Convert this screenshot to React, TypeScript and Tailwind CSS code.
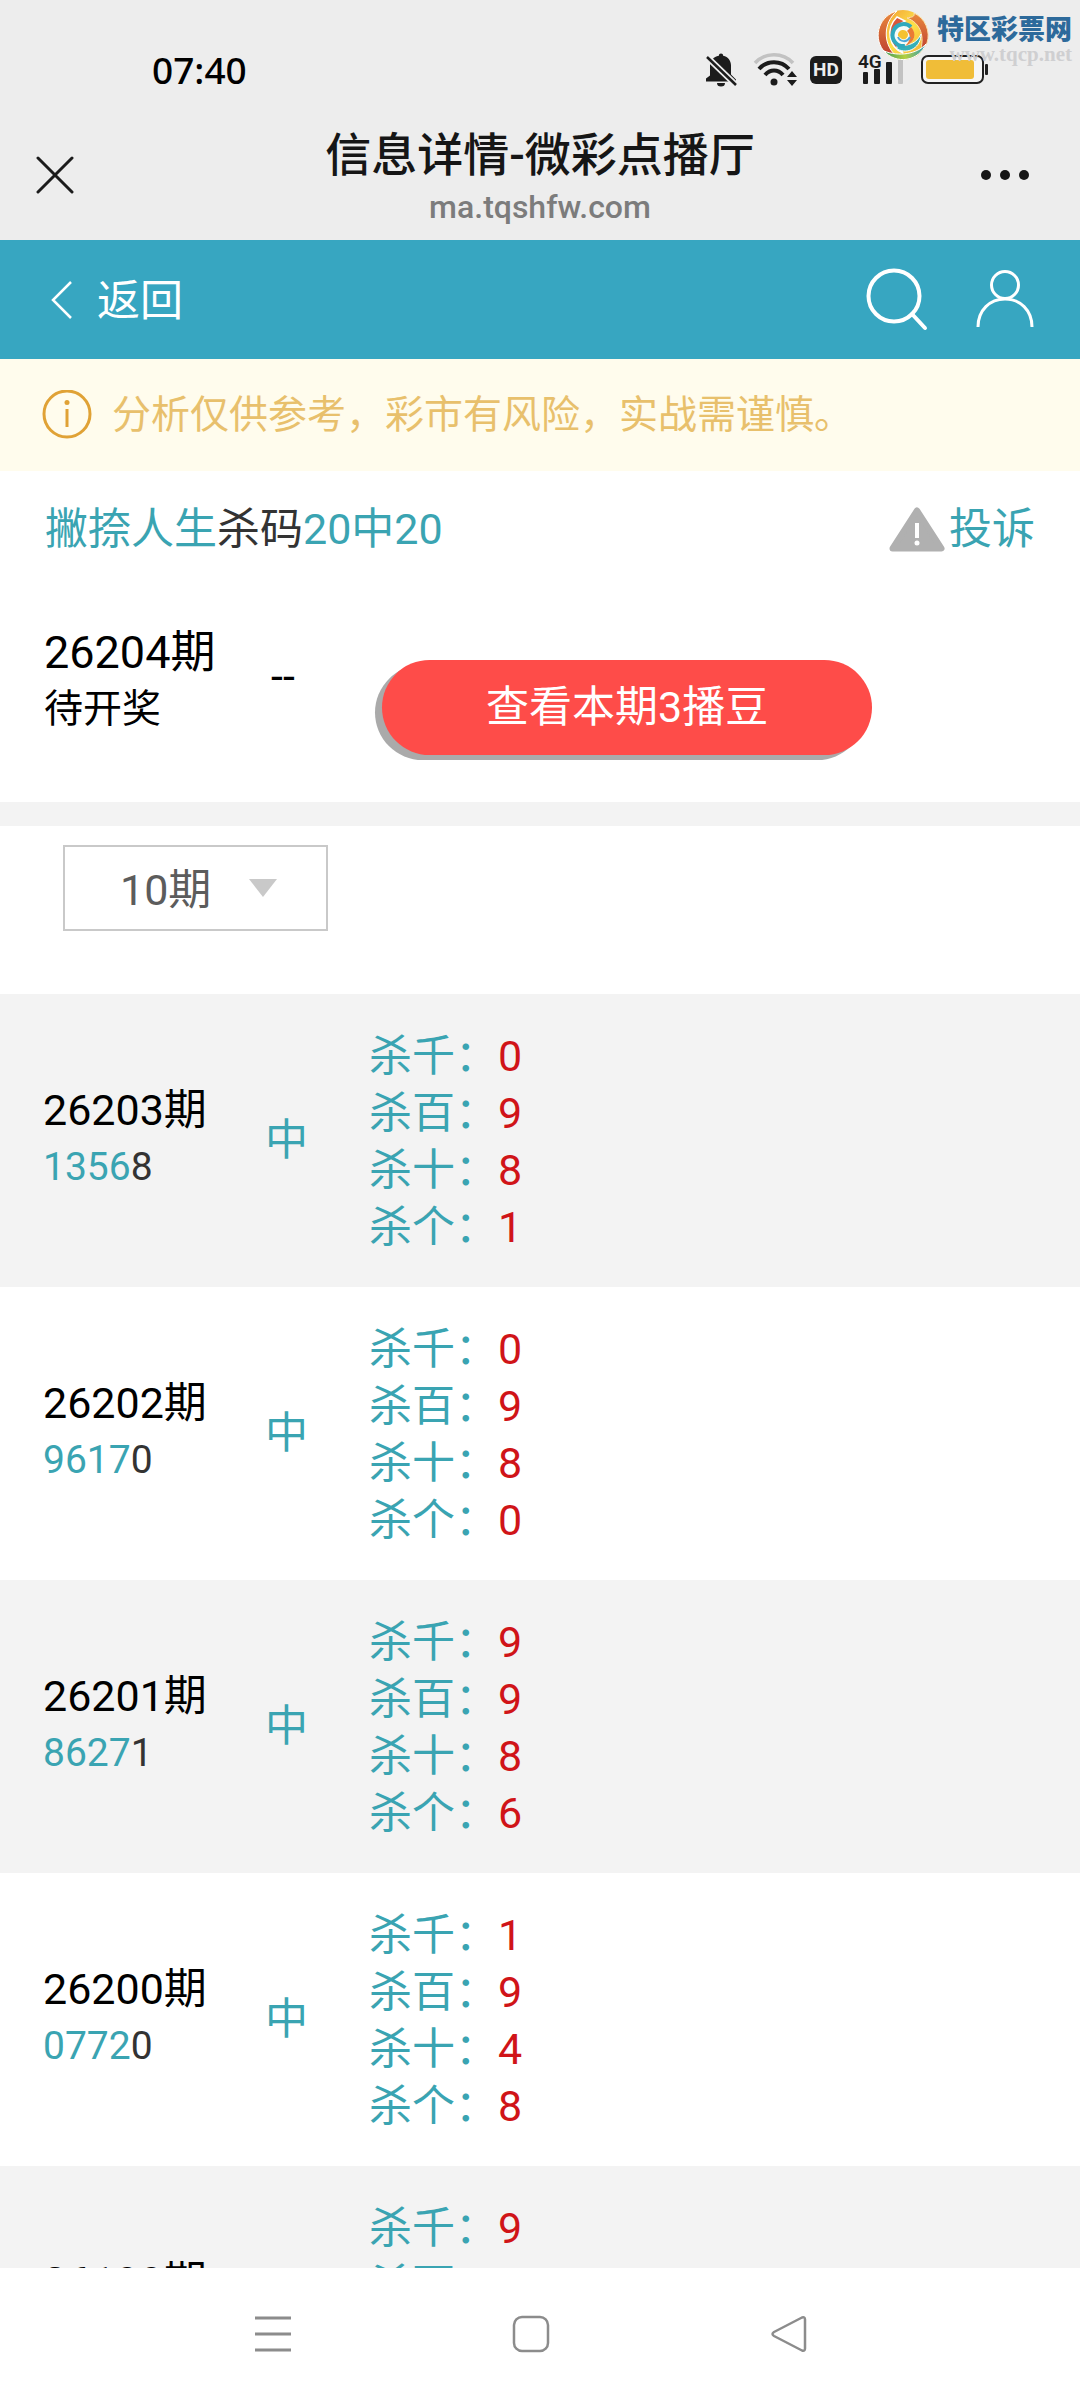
import React, { useState } from "react";

type Kill = { label: string; value: string };

type Issue = {
  issue: string;
  hit: string;
  rest: string;
  status: string;
  kills: Kill[];
};

const makeKills = (values: string[]): Kill[] =>
  ["杀千", "杀百", "杀十", "杀个"].map((label, i) => ({ label, value: values[i] }));

const issues: Issue[] = [
  { issue: "26203期", hit: "1356", rest: "8", status: "中", kills: makeKills(["0", "9", "8", "1"]) },
  { issue: "26202期", hit: "9617", rest: "0", status: "中", kills: makeKills(["0", "9", "8", "0"]) },
  { issue: "26201期", hit: "8627", rest: "1", status: "中", kills: makeKills(["9", "9", "8", "6"]) },
  { issue: "26200期", hit: "0772", rest: "0", status: "中", kills: makeKills(["1", "9", "4", "8"]) },
  { issue: "26199期", hit: "", rest: "", status: "中", kills: makeKills(["9", "", "", ""]) },
];

function Watermark() {
  return (
    <div className="absolute top-2 right-2 flex items-start gap-2">
      <svg className="h-[54px] w-[52px]" viewBox="-26 -27 52 54">
        <defs>
          <linearGradient id="warm" x1="0" y1="0" x2="1" y2="1">
            <stop offset="0" stopColor="#f0932f" />
            <stop offset="0.500" stopColor="#fde14a" />
            <stop offset="1" stopColor="#f2a02c" />
          </linearGradient>
          <linearGradient id="red" x1="0" y1="0" x2="0" y2="1">
            <stop offset="0" stopColor="#ea8a3c" />
            <stop offset="1" stopColor="#bd3f30" />
          </linearGradient>
          <linearGradient id="cool" x1="0" y1="0" x2="1" y2="0">
            <stop offset="0" stopColor="#3a9a5c" />
            <stop offset="0.500" stopColor="#b5cf3e" />
            <stop offset="1" stopColor="#2b9bb8" />
          </linearGradient>
        </defs>
        <circle r="25" fill="url(#warm)" />
        {/* outer blades */}
        <path d="M-6 -24A25 25 0 0 0 -20 15C-16 19 -12 20 -8 20C-20 8 -20 -12 -6 -24Z" fill="url(#red)" stroke="#fff" strokeWidth="1" />
        <path d="M-6 -18C-18 -6 -14 12 0 18C-10 6 -10 -8 2 -14Z" fill="#d9573a" stroke="#fff" strokeWidth="1.500" />
        <path d="M11 -22A25 25 0 0 1 24 8C22 12 20 14 17 17C22 2 18 -12 4 -17C9 -18 12 -18 11 -22Z" fill="url(#red)" stroke="#fbe3b0" strokeWidth="1" />
        <path d="M-19 16A25 25 0 0 0 23 9C14 19 -4 22 -19 16Z" fill="url(#cool)" stroke="#fff" strokeWidth="1" />
        <path d="M-6 14C6 20 18 12 18 -1C14 8 4 13 -6 8Z" fill="#35b0b8" stroke="#fff" strokeWidth="1" />
        {/* inner swirl */}
        <circle r="11" fill="#f4fbf8" />
        <path d="M8 -8A11 11 0 1 0 2 11" fill="none" stroke="#2fa9bd" strokeWidth="4" />
        <path d="M8 -8C14 -2 12 8 2 11C8 6 8 0 4 -4Z" fill="#ea7b34" />
        <path d="M-5 1A5 5 0 0 1 5 -1C5 3 2 5 -1 4Z" fill="#f5c230" />
        <path d="M-5 2C-3 7 4 8 7 2" fill="none" stroke="#4aa6d8" strokeWidth="2" />
      </svg>
      <div className="pt-2 text-right">
        <div className="text-[27px] leading-7 font-black text-[#2d6a9b]">特区彩票网</div>
        <div className="font-['Liberation_Serif',serif] text-[21px] leading-5 font-bold text-[#cfcfd1]">www.tqcp.net</div>
      </div>
    </div>
  );
}

function StatusBar() {
  return (
    <div className="flex h-[110px] items-center justify-between pt-[30px] pr-[91px] pl-[152px]">
      <span className="font-['Noto_Sans',sans-serif] text-[37px] leading-10 font-medium text-black">07:40</span>
      <div className="flex items-center gap-3">
        <svg className="h-9 w-9" viewBox="0 0 36 36" fill="#1c1c1c">
          <path d="M17 1.500a2.200 2.200 0 0 1 2.200 2.200c5 1.200 7.800 5 7.800 9.800v9l5 5v2H2v-3l4-3v-10c0-5 3.500-8.600 8.800-9.800A2.200 2.200 0 0 1 17 1.500Z" />
          <path d="M13 31h8a4 3.500 0 0 1-8 0Z" />
          <path d="M3 5L32 33" stroke="#ededed" strokeWidth="6" />
          <path d="M3 5L32 33" stroke="#1c1c1c" strokeWidth="2.500" />
        </svg>
        <svg className="h-9 w-[46px]" viewBox="0 0 46 36" fill="none">
          <path d="M3 11C13 0 31 0 41 11" stroke="#c2c2c2" strokeWidth="3.500" />
          <path d="M7 17C15 8 29 8 37 17" stroke="#1c1c1c" strokeWidth="4" />
          <path d="M13 23C18 17 26 17 31 23" stroke="#1c1c1c" strokeWidth="4" />
          <circle cx="22" cy="30" r="3.500" fill="#1c1c1c" />
          <path d="M40 19l5 6H35Z M40 34l5-6H35Z" fill="#1c1c1c" />
        </svg>
        <div className="w-9">
          <div className="flex h-7 w-8 items-center justify-center rounded-md bg-[#1c1c1c] font-['Roboto',sans-serif] text-[19px] font-bold text-[#ededed]">
            HD
          </div>
        </div>
        <svg className="h-9 w-[50px] overflow-visible" viewBox="0 0 50 36" fill="#1c1c1c">
          <text x="0" y="16" fontFamily="Roboto, sans-serif" fontSize="19" fontWeight="600">4G</text>
          <rect x="5" y="20" width="5" height="12" rx="1" />
          <rect x="16" y="17" width="6" height="15" rx="1" />
          <rect x="28" y="10" width="6" height="22" rx="1" />
          <rect x="40" y="4" width="5" height="28" rx="1" fill="#c2c2c2" />
        </svg>
        <svg className="h-9 w-[69px]" viewBox="0 0 69 36">
          <rect x="2" y="4" width="61" height="27" rx="6" fill="#f6f6f6" stroke="#222" strokeWidth="2" />
          <rect x="6" y="8" width="48" height="19" rx="3" fill="#f0bd38" />
          <rect x="65" y="12" width="3" height="11" rx="1" fill="#222" />
        </svg>
      </div>
    </div>
  );
}

function TitleBar() {
  return (
    <div className="grid h-[130px] grid-cols-[1fr_auto_1fr] items-center px-9">
      <button type="button" aria-label="关闭" className="justify-self-start">
        <svg className="h-[38px] w-[38px]" viewBox="0 0 38 38" stroke="#1c1c1c" strokeWidth="3" strokeLinecap="round">
          <path d="M2 2L36 36M36 2L2 36" />
        </svg>
      </button>
      <div className="pt-3 text-center">
        <h1 className="text-[46px] leading-[52px] font-medium text-[#161616]">信息详情-微彩点播厅</h1>
        <p className="text-[32px] leading-[52px] font-medium text-[#7c7c7c]">ma.tqshfw.com</p>
      </div>
      <button type="button" aria-label="更多" className="mr-3 justify-self-end">
        <svg className="h-4 w-[54px]" viewBox="0 0 54 16" fill="#161616">
          <circle cx="8" cy="8" r="5" />
          <circle cx="27" cy="8" r="5" />
          <circle cx="46" cy="8" r="5" />
        </svg>
      </button>
    </div>
  );
}

function SiteHeader() {
  return (
    <header className="flex h-[119px] items-center justify-between bg-[#37a6c1] pr-[45px] pl-[49px] text-white">
      <a href="#" className="flex items-center gap-6 text-[43px] leading-[57px]">
        <svg className="h-10 w-6" viewBox="0 0 24 40" fill="none" stroke="currentColor" strokeWidth="2.500">
          <path d="M22 2L4 20L22 38" />
        </svg>
        <span className="pt-1">返回</span>
      </a>
      <div className="flex items-center gap-[46px]">
        <button type="button" aria-label="搜索">
          <svg className="h-16 w-16" viewBox="0 0 64 64" fill="none" stroke="currentColor" strokeWidth="4" strokeLinecap="round">
            <circle cx="29" cy="28" r="25.500" />
            <path d="M47 46L60 60" />
          </svg>
        </button>
        <button type="button" aria-label="我的">
          <svg className="h-16 w-[60px]" viewBox="0 0 60 64" fill="none" stroke="currentColor" strokeWidth="3">
            <circle cx="30" cy="17" r="13.500" />
            <path d="M3 59C3 42 15 31 30 31S57 42 57 59" />
          </svg>
        </button>
      </div>
    </header>
  );
}

export default function App() {
  const [range, setRange] = useState("10");

  return (
    <div className="flex h-screen flex-col overflow-hidden bg-white font-['Roboto','Noto_Sans_CJK_SC',sans-serif] text-black">
      <div className="relative bg-[#ededed]">
        <StatusBar />
        <TitleBar />
        <Watermark />
      </div>

      <SiteHeader />

      <main className="min-h-0 flex-1 overflow-hidden">
        <div className="flex h-28 items-center gap-5 bg-[#fffced] px-[42px] text-[39px] text-[#e8c06c]">
          <svg className="h-[50px] w-[50px]" viewBox="0 0 50 50" fill="none" stroke="#e0a236" strokeWidth="3">
            <circle cx="25" cy="24" r="23" />
            <path d="M25 19V37" />
            <circle cx="25" cy="12.500" r="2.500" fill="#e0a236" stroke="none" />
          </svg>
          <p>分析仅供参考，彩市有风险，实战需谨慎。</p>
        </div>

        {/* Expert and current issue */}
        <section className="border-b-[24px] border-[#f3f3f3]">
          <div className="flex h-[117px] items-center justify-between px-[45px] text-[43px] leading-[57px] text-[#3aa4b2]">
            <h2>
              撇捺人生<span className="text-[#333]">杀码</span>20中20
            </h2>
            <a href="#" className="flex items-center gap-1">
              <svg className="h-[46px] w-14" viewBox="0 0 56 46">
                <path d="M28 3.500L52.500 41.500H3.500Z" fill="#b0b0b0" stroke="#b0b0b0" strokeWidth="6" strokeLinejoin="round" />
                <path d="M26 16h4v15h-4Z" fill="#fff" />
                <circle cx="28" cy="36" r="2.500" fill="#fff" />
              </svg>
              投诉
            </a>
          </div>
          <div className="flex h-[214px] items-start px-11 pt-9">
            <div className="w-[227px] leading-[57px]">
              <p className="text-[45px]">26204期</p>
              <p className="text-[39px]">待开奖</p>
            </div>
            <p className="w-[111px] pt-6 text-[43px] leading-[57px]">--</p>
            <button
              type="button"
              className="mt-9 h-[95px] rounded-full bg-[#fe4c49] px-[104px] text-[43px] text-white shadow-[-7px_5px_0_#aaaaaa]"
            >
              查看本期3播豆
            </button>
          </div>
        </section>

        {/* History filter */}
        <div className="h-[168px] px-[63px] pt-[19px]">
          <div className="relative w-[265px]">
            <select
              aria-label="期数"
              value={range}
              onChange={(e) => setRange(e.target.value)}
              className="h-[86px] w-full appearance-none border-2 border-[#c9c9c9] bg-white pt-1 pl-[55px] text-[43px] text-[#5c5c5c] outline-none"
            >
              <option value="10">10期</option>
              <option value="20">20期</option>
              <option value="30">30期</option>
            </select>
            <svg className="pointer-events-none absolute top-[34px] right-[51px] h-[18px] w-7" viewBox="0 0 28 18" fill="#c9c9c9">
              <path d="M0 0H28L14 18Z" />
            </svg>
          </div>
        </div>

        <table className="w-full text-[43px] leading-[57px]">
          <tbody>
            {issues.map((row) => (
              <tr key={row.issue} className="odd:bg-[#f3f3f3]">
                <td className="w-[264px] pb-1 pl-[43px]">
                  <div>{row.issue}</div>
                  <div className="h-[57px] text-[39px] text-[#3aa4b2]">
                    {row.hit}
                    <span className="text-[#333]">{row.rest}</span>
                  </div>
                </td>
                <td className="w-[105px] pl-px text-[#3aa4b2]">{row.status}</td>
                <td className="pt-[34px] pb-[31px]">
                  {row.kills.map((kill) => (
                    <div key={kill.label} className="text-[#3aa4b2]">
                      {kill.label}：<span className="text-[#d01418]">{kill.value}</span>
                    </div>
                  ))}
                </td>
              </tr>
            ))}
          </tbody>
        </table>
      </main>

      {/* System navigation */}
      <nav className="flex h-[132px] items-center justify-center gap-[220px] bg-white pr-[18px]">
        <button type="button" aria-label="菜单">
          <svg className="h-[38px] w-[38px]" viewBox="0 0 38 38" stroke="#8c8c8c" strokeWidth="3">
            <path d="M1 3H37M1 19H37M1 35H37" />
          </svg>
        </button>
        <button type="button" aria-label="主屏幕">
          <svg className="h-[38px] w-[38px]" viewBox="0 0 38 38" fill="none" stroke="#8c8c8c" strokeWidth="2.500">
            <rect x="2" y="2" width="34" height="34" rx="8" />
          </svg>
        </button>
        <button type="button" aria-label="返回">
          <svg className="h-[38px] w-[38px]" viewBox="0 0 38 38" fill="none" stroke="#8c8c8c" strokeWidth="2.500" strokeLinejoin="round">
            <path d="M32 2.500Q35 1.500 35 4.500V33.500Q35 36.500 32 35.500L4 21Q1 19 4 17Z" />
          </svg>
        </button>
      </nav>
    </div>
  );
}
